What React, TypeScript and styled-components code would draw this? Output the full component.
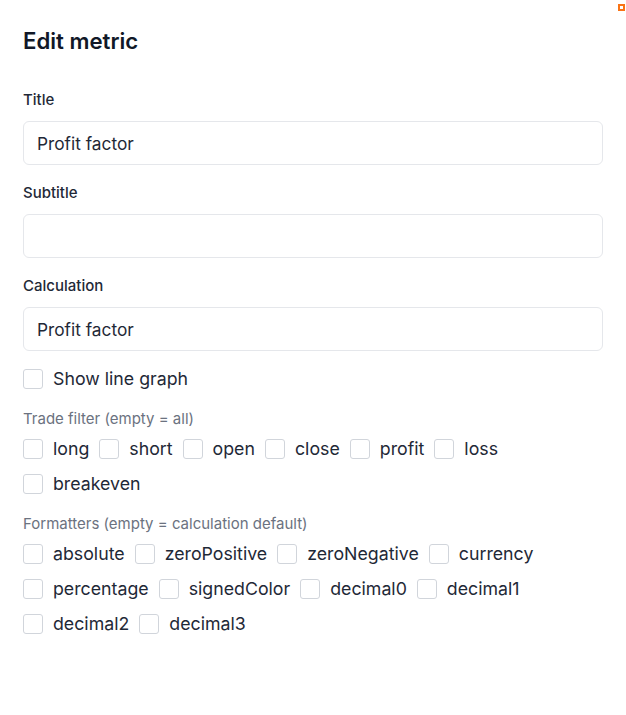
import styled, { createGlobalStyle } from "styled-components";

const GlobalStyle = createGlobalStyle`
  html, body {
    margin: 0;
    padding: 0;
    background: #ffffff;
  }
  * {
    box-sizing: border-box;
  }
`;

const tradeFilters = ["long", "short", "open", "close", "profit", "loss", "breakeven"];
const formatters = [
  "absolute",
  "zeroPositive",
  "zeroNegative",
  "currency",
  "percentage",
  "signedColor",
  "decimal0",
  "decimal1",
  "decimal2",
  "decimal3",
];

const Check = ({ label }: { label: string }) => (
  <CheckLabel>
    <Box type="checkbox" />
    <span>{label}</span>
  </CheckLabel>
);

const App = () => {
  return (
    <Page>
      <GlobalStyle />
      <Corner />
      <Heading>Edit metric</Heading>

      <Field>
        <Label>Title</Label>
        <Input defaultValue="Profit factor" />
      </Field>

      <Field>
        <Label>Subtitle</Label>
        <Input defaultValue="" />
      </Field>

      <Field>
        <Label>Calculation</Label>
        <Input defaultValue="Profit factor" />
      </Field>

      <Section>
        <Check label="Show line graph" />
      </Section>

      <Section>
        <Caption>Trade filter (empty = all)</Caption>
        <CheckGrid>
          {tradeFilters.map((f) => (
            <Check key={f} label={f} />
          ))}
        </CheckGrid>
      </Section>

      <Section>
        <Caption>Formatters (empty = calculation default)</Caption>
        <CheckGrid>
          {formatters.map((f) => (
            <Check key={f} label={f} />
          ))}
        </CheckGrid>
      </Section>
    </Page>
  );
};

export default App;

const Page = styled.div`
  position: relative;
  width: 626px;
  min-height: 715px;
  padding: 27px 23px 40px 23px;
  font-family: Inter, "Noto Sans", sans-serif;
  color: #1f2937;
`;

const Corner = styled.div`
  position: absolute;
  top: 4px;
  right: 1px;
  width: 7px;
  height: 7px;
  border: 2px solid #f97316;
`;

const Heading = styled.h1`
  margin: 0 0 35px 0;
  font-size: 22.2px;
  line-height: 28px;
  font-weight: 600;
  color: #111827;
`;

const Field = styled.div`
  display: flex;
  flex-direction: column;
  gap: 11px;
  margin-bottom: 18px;
`;

const Label = styled.label`
  font-size: 15px;
  line-height: 20px;
  font-weight: 500;
  color: #1f2937;
`;

const Input = styled.input`
  width: 100%;
  height: 44px;
  padding: 0 13px;
  border: 1px solid #e5e7eb;
  border-radius: 6px;
  font-family: Inter, "Noto Sans", sans-serif;
  font-size: 17.3px;
  color: #1f2937;
  background: #fff;

  &:focus {
    outline: none;
    border-color: #9ca3af;
  }
`;

const Section = styled.div`
  display: flex;
  flex-direction: column;
  gap: 10px;
  margin-bottom: 20px;
`;

const Caption = styled.div`
  font-size: 15px;
  line-height: 20px;
  color: #6b7280;
`;

const CheckGrid = styled.div`
  display: flex;
  flex-wrap: wrap;
  column-gap: 10px;
  row-gap: 15px;
`;

const CheckLabel = styled.label`
  display: flex;
  align-items: center;
  gap: 10px;
  height: 20px;
  font-size: 17.75px;
  line-height: 20px;
  color: #1f2937;
  cursor: pointer;
`;

const Box = styled.input`
  appearance: none;
  margin: 0;
  width: 20px;
  height: 20px;
  border: 1px solid #d1d5db;
  border-radius: 3px;
  background: #fff;
  cursor: pointer;

  &:checked {
    background: #1f2937;
    border-color: #1f2937;
  }
`;
